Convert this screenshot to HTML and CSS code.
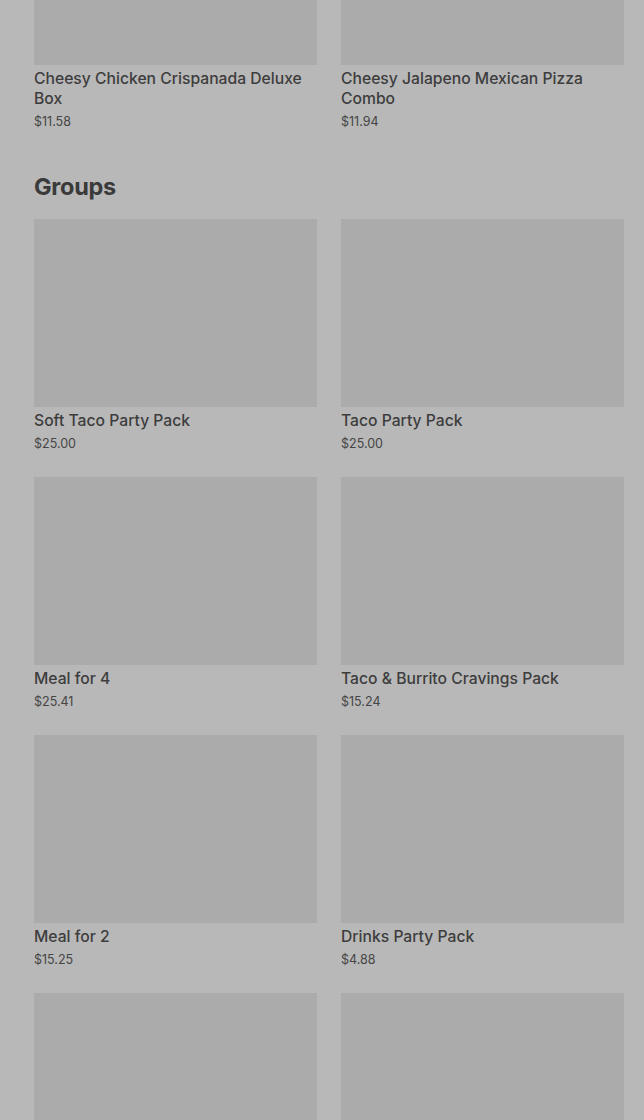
FILE: index.html
```html
<!DOCTYPE html>
<html lang="en">
<head>
	<meta charset="UTF-8">
	<title>Menu</title>
	<link rel="stylesheet" href="styles.css">
</head>
<body>
	<div class="page">
		<section class="section">
			<div class="grid">
				<div class="card">
					<div class="pic"></div>
					<div class="name">Cheesy Chicken Crispanada Deluxe Box</div>
					<div class="price">$11.58</div>
				</div>
				<div class="card">
					<div class="pic"></div>
					<div class="name">Cheesy Jalapeno Mexican Pizza Combo</div>
					<div class="price">$11.94</div>
				</div>
			</div>
		</section>

		<section class="section">
			<h2 class="title">Groups</h2>
			<div class="grid">
				<div class="card">
					<div class="pic"></div>
					<div class="name">Soft Taco Party Pack</div>
					<div class="price">$25.00</div>
				</div>
				<div class="card">
					<div class="pic"></div>
					<div class="name">Taco Party Pack</div>
					<div class="price">$25.00</div>
				</div>
				<div class="card">
					<div class="pic"></div>
					<div class="name">Meal for 4</div>
					<div class="price">$25.41</div>
				</div>
				<div class="card">
					<div class="pic"></div>
					<div class="name">Taco &amp; Burrito Cravings Pack</div>
					<div class="price">$15.24</div>
				</div>
				<div class="card">
					<div class="pic"></div>
					<div class="name">Meal for 2</div>
					<div class="price">$15.25</div>
				</div>
				<div class="card">
					<div class="pic"></div>
					<div class="name">Drinks Party Pack</div>
					<div class="price">$4.88</div>
				</div>
				<div class="card">
					<div class="pic"></div>
				</div>
				<div class="card">
					<div class="pic"></div>
				</div>
			</div>
		</section>
	</div>
</body>
</html>
```

FILE: styles.css
```css
* {
	margin: 0;
	padding: 0;
	box-sizing: border-box;
}
html, body {
	height: 100%;
	overflow: hidden;
}
body {
	background-color: #b8b8b8;
	font-family: Inter, "Liberation Sans", sans-serif;
	color: #3d3d3d;
}
.page {
	margin-top: -123px;
	padding: 0 20px 0 34px;
}
.section {
	margin-bottom: 41px;
}
.title {
	font-size: 23.5px;
	font-weight: 700;
	line-height: 30px;
	letter-spacing: -0.3px;
	margin-bottom: 17px;
	color: #3a3a3a;
}
.grid {
	display: grid;
	grid-template-columns: 1fr 1fr;
	column-gap: 24px;
	row-gap: 24px;
}
.pic {
	height: 188px;
	background-color: #ababab;
	margin-bottom: 4px;
}
.name {
	font-size: 15.7px;
	font-weight: 500;
	line-height: 20px;
	color: #3d3d3d;
}
.price {
	margin-top: 4px;
	font-size: 12.5px;
	line-height: 18px;
	color: #454545;
}
```
